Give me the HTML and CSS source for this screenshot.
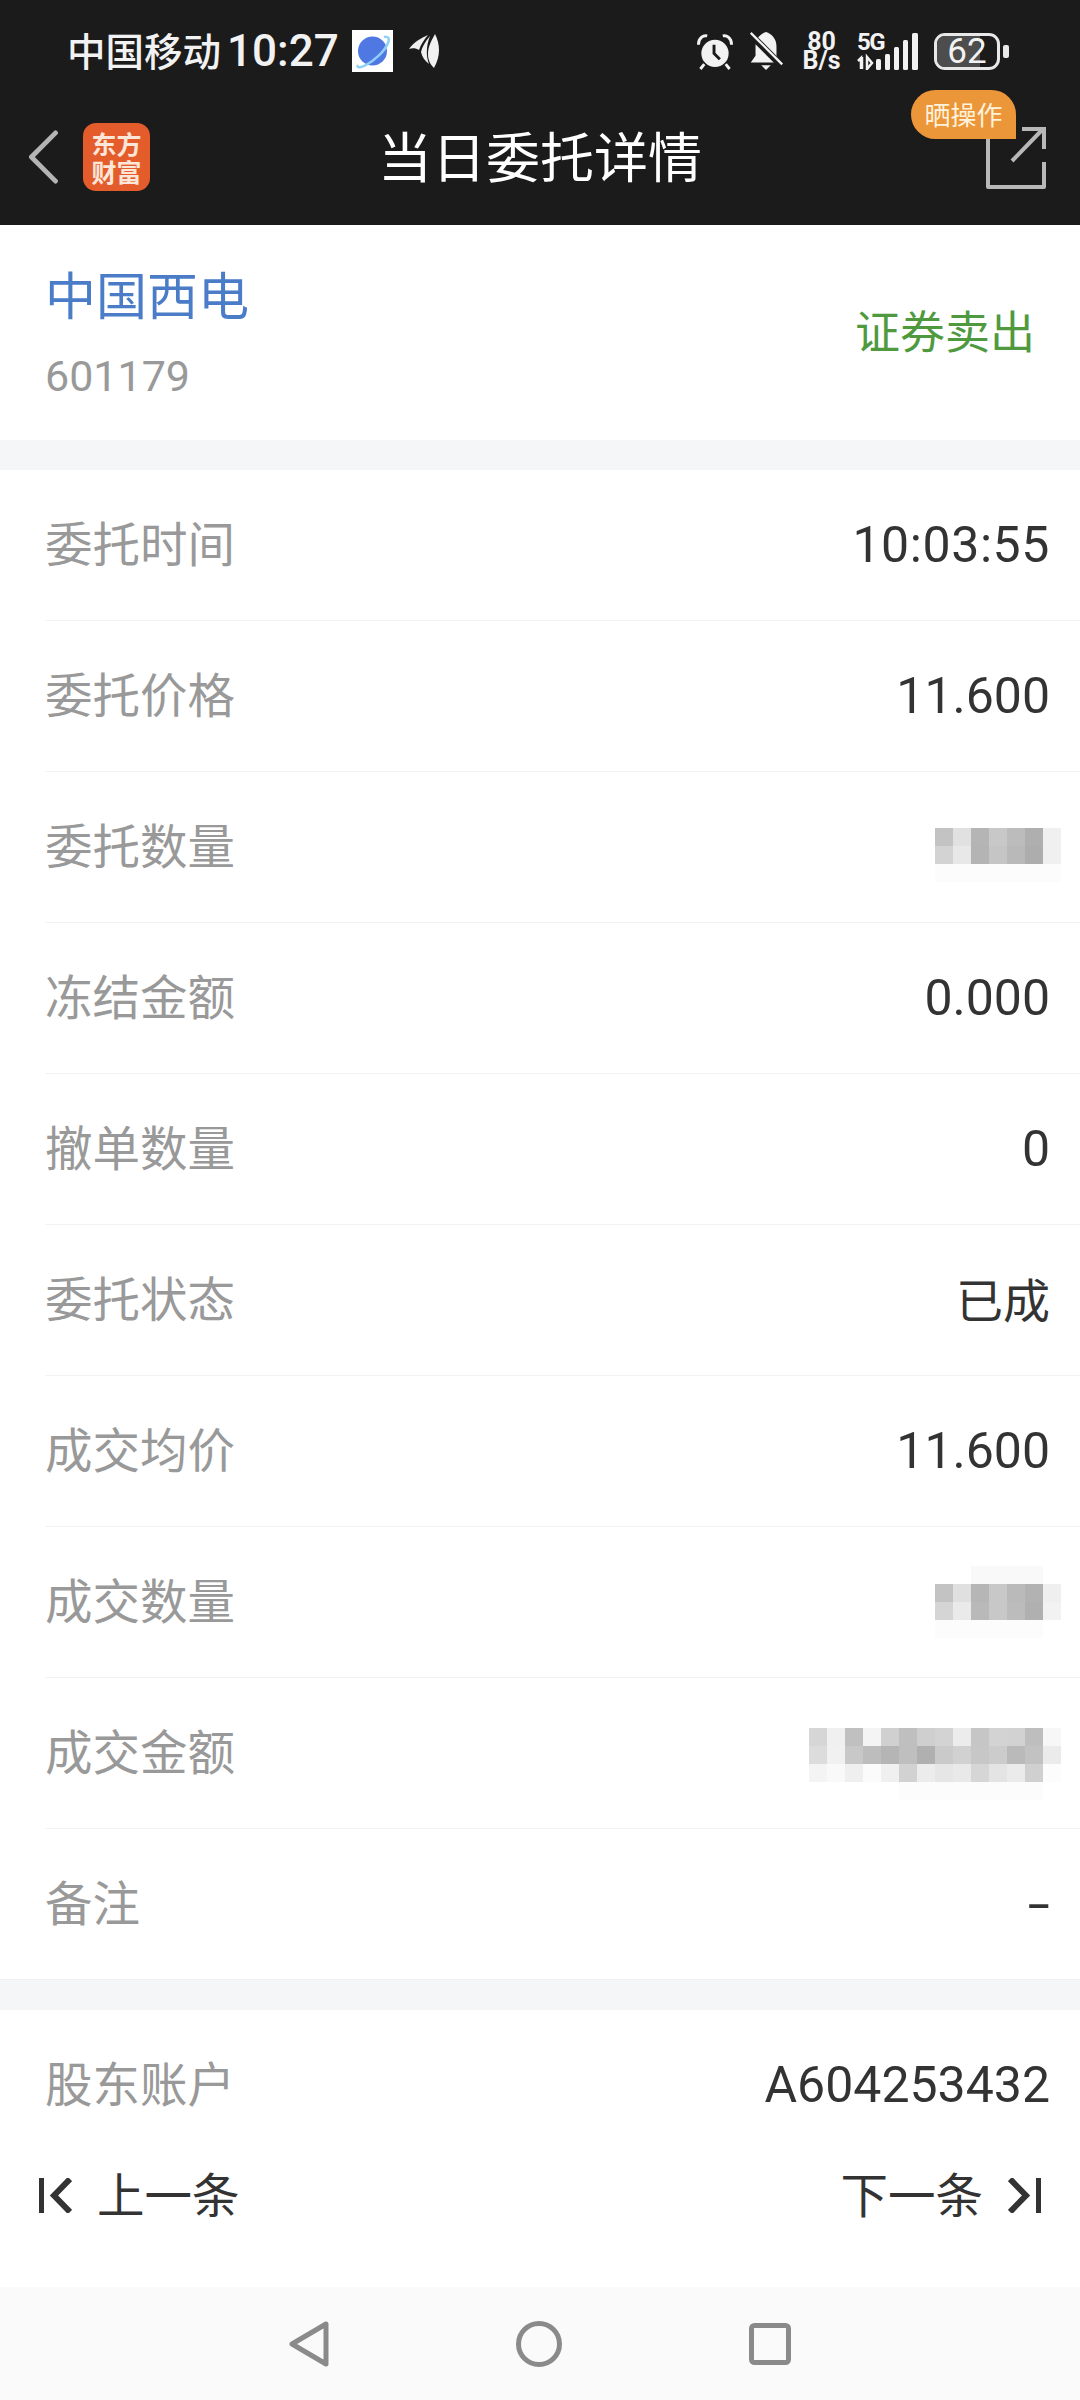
FILE: index.html
```html
<!DOCTYPE html>
<html lang="zh-CN">
<head>
  <meta charset="UTF-8" />
  <meta name="viewport" content="width=device-width, initial-scale=1.0"/>
  <title>当日委托详情</title>
  <link rel="stylesheet" href="styles.css">
</head>
<body>
  <div class="phone">

    <div class="topbar">
      <div class="statusbar">
        <div class="status-left">
          <span class="carrier">中国移动</span>
          <span class="clock">10:27</span>
          <svg class="app-planet" width="41" height="42" viewBox="0 0 41 42">
            <rect width="41" height="42" fill="#fff"/>
            <circle cx="20.500" cy="21" r="14.500" fill="#4f78e2"/>
            <path d="M6 35 C4 38 9 38 14 35 C23 30 33 21 36 13 C38 8 36 6 32 7" fill="none" stroke="#8fd0f7" stroke-width="2.500"/>
          </svg>
          <svg class="app-wing" width="31" height="35" viewBox="0 0 31 35">
            <path d="M0 15 C5 8 12 4 19 1 C15 6 12 10 10 16 C7 14 3 14 0 15Z" fill="#f0f0f0"/>
            <path d="M21 2 C16 8 13 13 12 18 C13 23 16 27 20 30 C17 22 17 12 21 2Z" fill="#f0f0f0"/>
            <path d="M26 0 C31 10 32 21 25 34 C21 30 19 26 19 20 C19 12 23 6 26 0Z" fill="#f0f0f0"/>
          </svg>
        </div>
        <div class="status-right">
          <svg width="38" height="37" viewBox="0 0 38 38">
            <circle cx="19" cy="21" r="14" fill="#f2f2f2"/>
            <path d="M18 12 V21 L24 27" fill="none" stroke="#1b1b1b" stroke-width="3"/>
            <path d="M2 12 C2 5 7 2 11 3 M36 12 C36 5 31 2 27 3 M8 32 L4 37 M30 32 L34 37" fill="none" stroke="#f2f2f2" stroke-width="3"/>
          </svg>
          <svg class="status-bell" width="36" height="40" viewBox="0 0 36 42">
            <path d="M18 1 C24 3 29 8 29 16 V26 L34 33 H2 L7 26 V16 C7 8 12 3 18 1Z" fill="#f2f2f2"/>
            <path d="M13 36 H23 L18 41Z" fill="#f2f2f2"/>
            <path d="M1 3 L34 36" stroke="#1b1b1b" stroke-width="7"/>
            <path d="M2 2 L35 35" stroke="#f2f2f2" stroke-width="2.500"/>
          </svg>
          <div class="net-speed"><span>80</span><span>B/s</span></div>
          <div class="signal">
            <span class="five-g">5G</span>
            <svg width="61" height="37" viewBox="0 0 61 37">
              <path d="M4 36 V25 L1 28 M5 24 V36 M10 24 V36 L15 30Z" fill="none" stroke="#f2f2f2" stroke-width="2.500"/>
              <rect x="19" y="26" width="5" height="11" rx="1.500" fill="#f2f2f2"/>
              <rect x="28" y="21" width="5" height="16" rx="1.500" fill="#f2f2f2"/>
              <rect x="37" y="14" width="5" height="23" rx="1.500" fill="#f2f2f2"/>
              <rect x="46" y="7" width="5" height="30" rx="1.500" fill="#f2f2f2"/>
              <rect x="55" y="0" width="6" height="37" rx="1.500" fill="#f2f2f2"/>
            </svg>
          </div>
          <div class="battery">
            <div class="battery-body"><div class="battery-level"></div><span>62</span></div>
            <div class="battery-cap"></div>
          </div>
        </div>
      </div>

      <div class="navbar">
        <div class="nav-left">
          <svg class="back" width="32" height="54" viewBox="0 0 32 56">
            <path d="M29 3 L4 28 L29 53" fill="none" stroke="#b4b4b4" stroke-width="5" stroke-linecap="round" stroke-linejoin="round"/>
          </svg>
          <div class="logo"><span>东方</span><span>财富</span></div>
        </div>
        <div class="nav-title">当日委托详情</div>
        <div class="nav-right">
          <div class="share-badge">晒操作</div>
          <svg width="60" height="62" viewBox="0 0 60 62">
            <path d="M29 2 H2 V60 H58 V35" fill="none" stroke="#b8b8b8" stroke-width="4" stroke-linejoin="round"/>
            <path d="M26 34 L56 3 M36 2 H58 V22" fill="none" stroke="#b8b8b8" stroke-width="4"/>
          </svg>
        </div>
      </div>
    </div>

    <div class="content">
      <div class="stock-head">
        <div>
          <div class="stock-name">中国西电</div>
          <div class="stock-code">601179</div>
        </div>
        <div class="order-type">证券卖出</div>
      </div>

      <div class="section">
        <div class="row"><span class="row-label">委托时间</span><span class="row-value row-time">10:03:55</span></div>
        <div class="row"><span class="row-label">委托价格</span><span class="row-value">11.600</span></div>
        <div class="row">
          <span class="row-label">委托数量</span>
          <svg class="mosaic mosaic-short" width="126" height="54" viewBox="0 0 126 54">
            <rect x="0" width="18" height="18" fill="#c3c3c3"/><rect x="18" width="18" height="18" fill="#e1e1e1"/><rect x="36" width="18" height="18" fill="#b5b5b5"/><rect x="54" width="18" height="18" fill="#c8c8c8"/><rect x="72" width="18" height="18" fill="#bcbcbc"/><rect x="90" width="18" height="18" fill="#afafaf"/><rect x="108" width="18" height="18" fill="#f0f0f0"/>
            <rect x="0" y="18" width="18" height="18" fill="#d3d3d3"/><rect x="18" y="18" width="18" height="18" fill="#e8e8e8"/><rect x="36" y="18" width="18" height="18" fill="#b4b4b4"/><rect x="54" y="18" width="18" height="18" fill="#c5c5c5"/><rect x="72" y="18" width="18" height="18" fill="#b9b9b9"/><rect x="90" y="18" width="18" height="18" fill="#adadad"/><rect x="108" y="18" width="18" height="18" fill="#f0f0f0"/>
            <rect x="0" y="36" width="126" height="18" fill="#fcfcfc"/>
          </svg>
        </div>
        <div class="row"><span class="row-label">冻结金额</span><span class="row-value">0.000</span></div>
        <div class="row"><span class="row-label">撤单数量</span><span class="row-value">0</span></div>
        <div class="row"><span class="row-label">委托状态</span><span class="row-value row-value-cn">已成</span></div>
        <div class="row"><span class="row-label">成交均价</span><span class="row-value">11.600</span></div>
        <div class="row">
          <span class="row-label">成交数量</span>
          <svg class="mosaic" width="126" height="72" viewBox="0 0 126 72">
            <rect x="36" y="0" width="72" height="18" fill="#f9f9f9"/>
            <rect x="0" y="18" width="18" height="18" fill="#c3c3c3"/><rect x="18" y="18" width="18" height="18" fill="#e0e0e0"/><rect x="36" y="18" width="18" height="18" fill="#b6b6b6"/><rect x="54" y="18" width="18" height="18" fill="#c8c8c8"/><rect x="72" y="18" width="18" height="18" fill="#bababa"/><rect x="90" y="18" width="18" height="18" fill="#b2b2b2"/><rect x="108" y="18" width="18" height="18" fill="#efefef"/>
            <rect x="0" y="36" width="18" height="18" fill="#d5d5d5"/><rect x="18" y="36" width="18" height="18" fill="#eaeaea"/><rect x="36" y="36" width="18" height="18" fill="#b9b9b9"/><rect x="54" y="36" width="18" height="18" fill="#c8c8c8"/><rect x="72" y="36" width="18" height="18" fill="#bcbcbc"/><rect x="90" y="36" width="18" height="18" fill="#b0b0b0"/><rect x="108" y="36" width="18" height="18" fill="#f2f2f2"/>
            <rect x="0" y="54" width="108" height="18" fill="#fcfcfc"/>
          </svg>
        </div>
        <div class="row">
          <span class="row-label">成交金额</span>
          <svg class="mosaic mosaic-wide" width="252" height="72" viewBox="0 0 252 72">
            <rect x="0" width="18" height="18" fill="#d6d6d6"/><rect x="18" width="18" height="18" fill="#f0f0f0"/><rect x="36" width="18" height="18" fill="#c0c0c0"/><rect x="54" width="18" height="18" fill="#f4f4f4"/><rect x="72" width="18" height="18" fill="#d0d0d0"/><rect x="90" width="18" height="18" fill="#bfbfbf"/><rect x="108" width="18" height="18" fill="#cfcfcf"/><rect x="126" width="18" height="18" fill="#d3d3d3"/><rect x="144" width="18" height="18" fill="#ececec"/><rect x="162" width="18" height="18" fill="#c6c6c6"/><rect x="180" width="18" height="18" fill="#d3d3d3"/><rect x="198" width="18" height="18" fill="#d2d2d2"/><rect x="216" width="18" height="18" fill="#bebebe"/><rect x="234" width="18" height="18" fill="#f7f7f7"/>
            <rect x="0" y="18" width="18" height="18" fill="#dcdcdc"/><rect x="18" y="18" width="18" height="18" fill="#f1f1f1"/><rect x="36" y="18" width="18" height="18" fill="#c8c8c8"/><rect x="54" y="18" width="18" height="18" fill="#bdbdbd"/><rect x="72" y="18" width="18" height="18" fill="#b5b5b5"/><rect x="90" y="18" width="18" height="18" fill="#bfbfbf"/><rect x="108" y="18" width="18" height="18" fill="#b0b0b0"/><rect x="126" y="18" width="18" height="18" fill="#cacaca"/><rect x="144" y="18" width="18" height="18" fill="#d1d1d1"/><rect x="162" y="18" width="18" height="18" fill="#c7c7c7"/><rect x="180" y="18" width="18" height="18" fill="#cccccc"/><rect x="198" y="18" width="18" height="18" fill="#bababa"/><rect x="216" y="18" width="18" height="18" fill="#c2c2c2"/><rect x="234" y="18" width="18" height="18" fill="#ebebeb"/>
            <rect x="0" y="36" width="18" height="18" fill="#f4f4f4"/><rect x="18" y="36" width="18" height="18" fill="#f9f9f9"/><rect x="36" y="36" width="18" height="18" fill="#efefef"/><rect x="54" y="36" width="18" height="18" fill="#fbfbfb"/><rect x="72" y="36" width="18" height="18" fill="#f0f0f0"/><rect x="90" y="36" width="18" height="18" fill="#d2d2d2"/><rect x="108" y="36" width="18" height="18" fill="#ececec"/><rect x="126" y="36" width="18" height="18" fill="#e6e6e6"/><rect x="144" y="36" width="18" height="18" fill="#e9e9e9"/><rect x="162" y="36" width="18" height="18" fill="#d6d6d6"/><rect x="180" y="36" width="18" height="18" fill="#e4e4e4"/><rect x="198" y="36" width="18" height="18" fill="#ebebeb"/><rect x="216" y="36" width="18" height="18" fill="#d0d0d0"/><rect x="234" y="36" width="18" height="18" fill="#fcfcfc"/>
            <rect x="90" y="54" width="144" height="18" fill="#fcfcfc"/>
          </svg>
        </div>
        <div class="row"><span class="row-label">备注</span><span class="row-value row-dash">-</span></div>
      </div>

      <div class="section account">
        <div class="row"><span class="row-label">股东账户</span><span class="row-value">A604253432</span></div>
      </div>
    </div>

    <div class="pager">
      <div class="pager-btn">
        <svg width="33" height="35" viewBox="0 0 33 35">
          <path d="M2.500 0 V35" stroke="#333" stroke-width="5"/>
          <path d="M31 1 L15 17.500 L31 34" fill="none" stroke="#333" stroke-width="6"/>
        </svg>
        <span>上一条</span>
      </div>
      <div class="pager-btn">
        <span>下一条</span>
        <svg width="33" height="35" viewBox="0 0 33 35">
          <path d="M30.500 0 V35" stroke="#333" stroke-width="5"/>
          <path d="M2 1 L18 17.500 L2 34" fill="none" stroke="#333" stroke-width="6"/>
        </svg>
      </div>
    </div>

    <div class="sysnav">
      <svg width="40" height="46" viewBox="0 0 40 46">
        <path d="M37 3 V43 L3 23Z" fill="none" stroke="#8a8a8a" stroke-width="5" stroke-linejoin="round"/>
      </svg>
      <svg width="46" height="46" viewBox="0 0 46 46">
        <circle cx="23" cy="23" r="20.500" fill="none" stroke="#8a8a8a" stroke-width="5"/>
      </svg>
      <svg width="42" height="42" viewBox="0 0 42 42">
        <rect x="2.500" y="2.500" width="37" height="37" rx="3" fill="none" stroke="#8a8a8a" stroke-width="5"/>
      </svg>
    </div>

  </div>
</body>
</html>
```

FILE: styles.css
```css
* {
  box-sizing: border-box;
}

html, body {
  margin: 0;
  padding: 0;
}

body {
  font-family: "Roboto", "Noto Sans CJK SC", sans-serif;
  background-color: #f5f6f8;
}

.phone {
  width: 1080px;
  height: 2400px;
  display: flex;
  flex-direction: column;
  overflow: hidden;
  background-color: #f5f6f8;
}

/* top dark area */
.topbar {
  height: 225px;
  flex-shrink: 0;
  background-color: #1b1b1b;
  color: #fff;
}

.statusbar {
  height: 100px;
  padding: 30px 71px 0 67px;
  display: flex;
  justify-content: space-between;
  align-items: flex-start;
}

.status-left {
  display: flex;
  align-items: center;
  height: 42px;
  color: #f2f2f2;
}

.carrier {
  padding-bottom: 4px;
  font-family: "Noto Sans CJK SC", sans-serif;
  font-size: 38.500px;
  font-weight: 500;
  line-height: 42px;
}

.clock {
  font-size: 44px;
  font-weight: 500;
  margin-left: 6px;
  line-height: 42px;
}

.app-planet {
  margin-left: 13px;
}

.app-wing {
  margin-left: 16px;
}

.status-right {
  display: flex;
  align-items: center;
  height: 42px;
  color: #f2f2f2;
}

.status-bell {
  margin-left: 14px;
}

.net-speed {
  width: 39px;
  margin-left: 18px;
  display: flex;
  flex-direction: column;
  align-items: center;
  font-size: 25px;
  font-weight: 700;
  line-height: 19px;
}

.signal {
  position: relative;
  width: 61px;
  height: 37px;
  margin-left: 16px;
}

.signal svg {
  display: block;
}

.five-g {
  position: absolute;
  left: 0;
  top: 0;
  font-size: 24px;
  font-weight: 700;
  line-height: 18px;
  letter-spacing: -1.500px;
}

.battery {
  margin-left: 16px;
  display: flex;
  align-items: center;
}

.battery-body {
  position: relative;
  width: 66px;
  height: 37px;
  border: 3px solid #e8e8e8;
  border-radius: 11px;
  text-align: center;
}

.battery-level {
  position: absolute;
  left: 0;
  top: 0;
  bottom: 0;
  width: 72%;
  border-radius: 8px 0 0 8px;
  background-color: #4d4d4d;
}

.battery-body span {
  position: relative;
  display: block;
  font-size: 35px;
  line-height: 31px;
  color: #f2f2f2;
}

.battery-cap {
  width: 6px;
  height: 13px;
  margin-left: 3px;
  border-radius: 2px;
  background-color: #e8e8e8;
}

.navbar {
  position: relative;
  height: 125px;
  display: flex;
  align-items: center;
  justify-content: center;
}

.nav-left {
  position: absolute;
  left: 27px;
  top: 23px;
  display: flex;
  align-items: center;
}

.logo {
  width: 67px;
  height: 68px;
  margin-left: 24px;
  border-radius: 13px;
  background-color: #e55c2c;
  color: #fbe6d8;
  font-family: "Noto Sans CJK SC", sans-serif;
  font-size: 25px;
  font-weight: 700;
  line-height: 28px;
  display: flex;
  flex-direction: column;
  align-items: center;
  justify-content: center;
}

.nav-title {
  font-family: "Noto Sans CJK SC", sans-serif;
  font-size: 54px;
  line-height: 60px;
  margin-top: -16px;
}

.nav-right {
  position: absolute;
  left: 986px;
  top: 27px;
}

.nav-right svg {
  display: block;
}

.share-badge {
  position: absolute;
  left: -75px;
  top: -37px;
  width: 105px;
  height: 49px;
  border-radius: 25px 25px 0 25px;
  background-color: #ec963a;
  color: #fff2dc;
  font-family: "Noto Sans CJK SC", sans-serif;
  font-size: 26px;
  line-height: 47px;
  text-align: center;
}

.content {
  flex: 1;
  overflow: hidden;
  background-color: #f5f6f8;
}

/* stock header */
.stock-head {
  height: 215px;
  padding: 36px 45px 0 45px;
  display: flex;
  justify-content: space-between;
  background-color: #fff;
}

.stock-name {
  font-family: "Noto Sans CJK SC", sans-serif;
  font-size: 51px;
  line-height: 64px;
  color: #4a7cc8;
}

.stock-code {
  margin-top: 26px;
  font-size: 43px;
  line-height: 50px;
  color: #999;
}

.order-type {
  margin-top: 39px;
  font-family: "Noto Sans CJK SC", sans-serif;
  font-size: 45px;
  line-height: 60px;
  color: #4f9a3f;
}

.section {
  margin-top: 30px;
  background-color: #fff;
  border-bottom: 1px solid #eee;
}

.row {
  height: 151px;
  margin-left: 45px;
  padding-right: 30px;
  display: flex;
  align-items: center;
  justify-content: space-between;
  border-bottom: 1px solid #f2f2f2;
}

.section .row:last-child {
  height: 150px;
  border-bottom: none;
}

.row-label {
  padding-bottom: 7px;
  font-family: "Noto Sans CJK SC", sans-serif;
  font-size: 47.500px;
  color: #999;
}

.row-value {
  font-family: "Roboto", "Noto Sans CJK SC", sans-serif;
  font-size: 50px;
  color: #333;
}

.row-time {
  letter-spacing: 0.600px;
}

.row-value-cn {
  padding-bottom: 6px;
  font-family: "Noto Sans CJK SC", sans-serif;
  font-size: 47px;
}

.row-dash {
  transform: scaleX(1.600);
  transform-origin: right center;
}

.mosaic {
  margin-right: -11px;
}

.mosaic-short {
  margin-top: 15px;
}

.mosaic-wide {
  margin-top: 21px;
}

/* pager */
.pager {
  height: 157px;
  flex-shrink: 0;
  padding: 0 39px 27px;
  display: flex;
  align-items: center;
  justify-content: space-between;
  background-color: #fff;
}

.pager-btn {
  display: flex;
  align-items: center;
  gap: 25px;
  font-family: "Noto Sans CJK SC", sans-serif;
  font-size: 47.500px;
  color: #333;
}

.pager-btn span {
  padding-bottom: 5px;
}

.sysnav {
  height: 113px;
  flex-shrink: 0;
  display: flex;
  align-items: center;
  justify-content: center;
  gap: 187px;
  background-color: #fafafa;
}
```
